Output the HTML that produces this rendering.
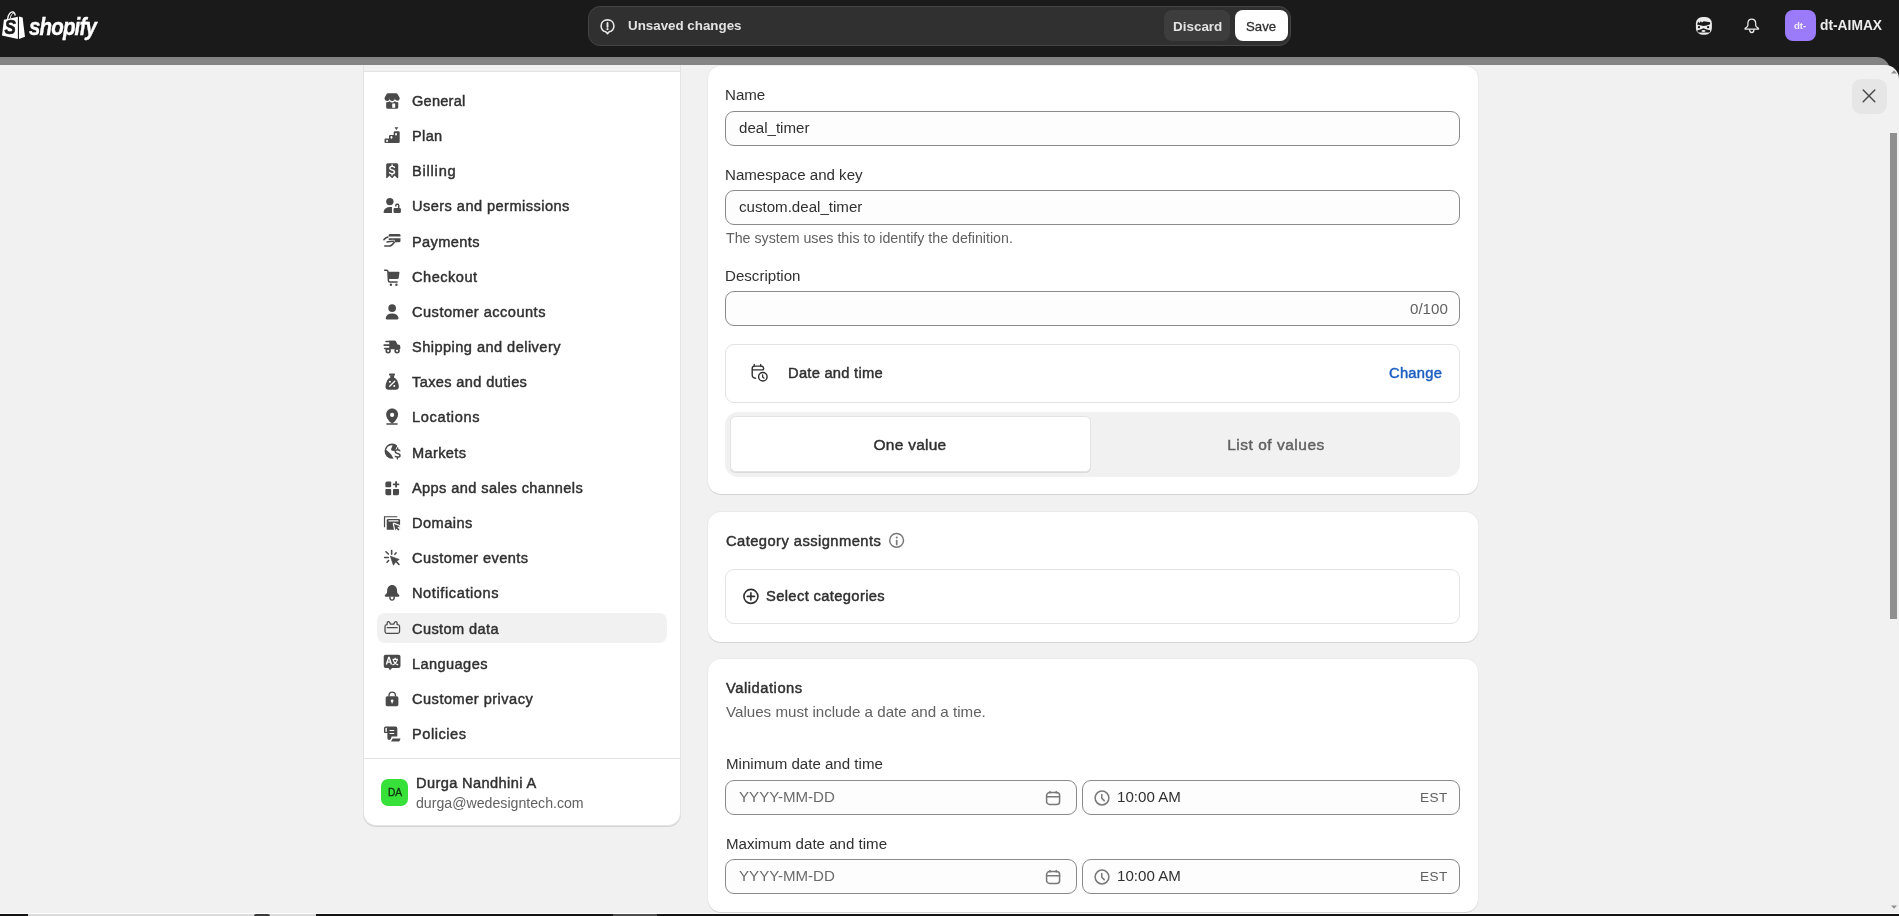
<!DOCTYPE html>
<html><head><meta charset="utf-8"><title>Shopify</title>
<style>
*{box-sizing:border-box}
html,body{margin:0;padding:0}
body{width:1899px;height:916px;overflow:hidden;position:relative;background:#1a1a1a;font-family:"Liberation Sans",sans-serif;color:#303030}
.a{position:absolute}
.t{position:absolute;white-space:nowrap;line-height:20px;will-change:transform}
.card{position:absolute;background:#fff;border-radius:13px;box-shadow:0 1px 0 #d4d4d4,0 0 0 1px #ebebeb}
.inp{position:absolute;background:#fdfdfd;border:1px solid #8a8a8a;border-radius:9px}
.box{position:absolute;background:#fff;border:1px solid #e3e3e3;border-radius:9px}
</style></head><body>
<div class="a" style="left:0;top:57px;width:1890px;height:40px;background:#848484;border-top-right-radius:14px"></div>
<div class="a" style="left:0;top:65px;width:1899px;height:849px;background:#f1f1f1;border-top-right-radius:14px"></div>
<svg class="a" style="left:0;top:8px;will-change:transform" width="30" height="36" viewBox="0 0 30 36">
<path d="M3.9 11.8 L17.9 8.7 L17.9 31 L2 27.6 Z" fill="#fff"/>
<path d="M19 8.6 L22.6 9.5 L25 28.7 L19 31 Z" fill="#fff"/>
<path d="M7.6 11 C8.2 6.5 10.5 3.8 12.6 3.9 C14.2 4 15 5.6 15.2 7.6" fill="none" stroke="#fff" stroke-width="1.3"/>
<path d="M10.2 10.4 C10.8 7 12.2 5.2 13.6 5.4" fill="none" stroke="#fff" stroke-width="1"/>
<text x="4.4" y="22.9" transform="scale(1,1.15)" font-family="Liberation Sans" font-weight="bold" font-style="italic" font-size="17" fill="#1a1a1a" stroke="#1a1a1a" stroke-width="0.6">S</text>
</svg>
<div class="t" style="left:28.90px;top:16.90px;font-size:20.5px;font-weight:bold;color:#fff;font-style:italic;letter-spacing:-0.85px;-webkit-text-stroke:0.35px #fff;transform:scaleY(1.15);transform-origin:0 11px">shopify</div>
<div class="a" style="left:588px;top:6px;width:703px;height:40px;background:#303030;border:1px solid #424545;border-radius:12px"></div>
<svg class="a" style="left:599px;top:18px" width="17" height="17" viewBox="0 0 17 17">
<path d="M8.5 1.9 C12.2 1.9 14.9 4.4 14.9 7.9 C14.9 10.9 12.9 13.1 10.2 13.8 L8.5 15.7 L6.8 13.8 C4.1 13.1 2.1 10.9 2.1 7.9 C2.1 4.4 4.8 1.9 8.5 1.9 Z" fill="none" stroke="#e6e6e6" stroke-width="1.6" stroke-linejoin="round"/>
<path d="M8.5 5 V8.9" stroke="#e6e6e6" stroke-width="1.9" stroke-linecap="round"/>
<circle cx="8.5" cy="11.2" r="1.1" fill="#e6e6e6"/>
</svg>
<div class="t" style="left:627.60px;top:15.87px;font-size:13.35px;font-weight:bold;color:#e3e3e3;">Unsaved changes</div>
<div class="a" style="left:1164px;top:10px;width:66px;height:31px;background:#3d3d3d;border-radius:8px"></div>
<div class="t" style="left:1172.60px;top:16.64px;font-size:13.45px;font-weight:bold;color:#e3e3e3;">Discard</div>
<div class="a" style="left:1235px;top:10px;width:53px;height:31px;background:#fff;border-radius:8px"></div>
<div class="t" style="left:1245.80px;top:16.53px;font-size:13.2px;font-weight:normal;color:#303030;-webkit-text-stroke:0.3px #303030">Save</div>
<svg class="a" style="left:1692px;top:14px" width="24" height="24" viewBox="0 0 24 24">
<rect x="3.9" y="2.9" width="16" height="17.8" rx="6.6" fill="#ececec"/>
<path d="M5.1 10.4L6.2 7.5L7.3 9L8.9 7.2L9.9 8.6L11.8 7.3L18.1 8.3V10.2L14.7 11.4L11.5 11.9L7.9 11.2Z" fill="#1a1a1a"/>
<circle cx="6.95" cy="13.2" r="1.15" fill="#1a1a1a"/><circle cx="16.1" cy="13.2" r="1.15" fill="#1a1a1a"/>
<path d="M5.5 16.3Q8.6 15.8 11.5 14.2Q14.4 15.8 18.1 16.3V17.6Q18.1 18.4 17.3 18.4H6.3Q5.5 18.4 5.5 17.6Z" fill="#1a1a1a"/>
<ellipse cx="11.5" cy="16.9" rx="2" ry="1" fill="#ececec"/>
</svg>
<svg class="a" style="left:1740px;top:14px" width="24" height="24" viewBox="0 0 24 24">
<path d="M11.8 5C9.4 5 7.9 6.9 7.9 9.2V10.9Q7.9 11.9 7.2 12.7L5.3 14.2Q4.6 15.2 5.7 15.2H17.9Q19 15.2 18.3 14.2L16.4 12.7Q15.7 11.9 15.7 10.9V9.2C15.7 6.9 14.2 5 11.8 5Z" fill="none" stroke="#ececec" stroke-width="1.25" stroke-linejoin="round"/>
<path d="M9.6 15.3Q9.6 18.6 11.8 18.6Q14 18.6 14 15.3" fill="none" stroke="#ececec" stroke-width="1.25"/>
</svg>
<div class="a" style="left:1785px;top:10px;width:31px;height:31px;background:#9b7bfa;border-radius:8px"></div>
<div class="t" style="left:1793.60px;top:15.67px;font-size:9.6px;font-weight:bold;color:#f3ecff;">dt-</div>
<div class="t" style="left:1819.80px;top:15.52px;font-size:13.8px;font-weight:bold;color:#ececec;">dt-AIMAX</div>
<div class="a" style="left:1852px;top:79px;width:35px;height:35px;background:#e6e6e6;border-radius:9px"></div>
<svg class="a" style="left:1860px;top:87px" width="18" height="18" viewBox="0 0 18 18">
<path d="M3.2 3 L14.8 14.8 M14.8 3 L3.2 14.8" stroke="#4a4a4a" stroke-width="1.45" stroke-linecap="round"/></svg>
<div class="a" style="left:1890px;top:133px;width:7px;height:486px;background:#8f8f8f"></div>
<svg class="a" style="left:1890px;top:69px" width="8" height="6" viewBox="0 0 8 6"><path d="M1 4.4 L4 1.2 L7 4.4Z" fill="#8f8f8f"/></svg>
<svg class="a" style="left:1890px;top:904px" width="8" height="6" viewBox="0 0 8 6"><path d="M1 1.6 L4 4.8 L7 1.6Z" fill="#8f8f8f"/></svg>
<div class="a" style="left:363px;top:65px;width:318px;height:761px;background:#fff;border:1px solid #e3e3e3;border-top:none;border-radius:0 0 13px 13px;box-shadow:0 1px 0 #d4d4d4"></div>
<div class="a" style="left:364px;top:65px;width:316px;height:7px;background:#f1f1f1;border-bottom:1px solid #e3e3e3"></div>
<div class="a" style="left:377px;top:613px;width:290px;height:30px;background:#f1f1f1;border-radius:8px"></div>
<div class="a" style="left:364px;top:758px;width:316px;height:1px;background:#e3e3e3"></div>
<svg class="a" style="left:380.70px;top:89.70px" width="22" height="22" viewBox="0 0 20 20"><path d="M6.4 3H13.6Q14.6 3 15.1 3.8L16.6 6.3Q17 7 17 7.7A2.2 2.2 0 0 1 12.6 7.6A2.4 2.4 0 0 1 7.8 7.6A2.3 2.3 0 0 1 3.2 7.7Q3.2 7 3.6 6.3L5 3.8Q5.5 3 6.4 3Z" fill="#4a4a4a"/><path d="M4.7 11.2Q6.7 11.4 7.8 10.2Q9 11.4 10.2 11.4Q11.4 11.4 12.6 10.2Q13.7 11.4 15.7 11.2V15.6Q15.7 17 14.3 17H6.1Q4.7 17 4.7 15.6Z" fill="#4a4a4a"/><rect x="10.2" y="12.3" width="2.7" height="3.9" rx=".3" fill="#fff"/></svg>
<div class="t" style="left:411.80px;top:90.96px;font-size:14.586px;font-weight:normal;color:#303030;letter-spacing:0.227px;-webkit-text-stroke:0.45px #303030;">General</div>
<svg class="a" style="left:380.70px;top:124.87px" width="22" height="22" viewBox="0 0 20 20"><path d="M3.2 13.2Q3.2 12.2 4.2 12.2H7.3V9.9Q7.3 9 8.2 9H11.5V6.6Q11.5 5.6 12.5 5.6H16Q17 5.6 17 6.6V15.4Q17 16.4 16 16.4H4.2Q3.2 16.4 3.2 15.4Z" fill="#4a4a4a"/><rect x="4.7" y="13.3" width="1.6" height="2.3" rx=".75" fill="#fff"/><rect x="8.65" y="10" width="1.7" height="2.5" rx=".8" fill="#fff"/><rect x="12.8" y="7.2" width="1.7" height="2.3" rx=".8" fill="#fff"/><path d="M12.2 2H15.8L14 4.6Z" fill="#4a4a4a"/></svg>
<div class="t" style="left:411.80px;top:126.13px;font-size:14.586px;font-weight:normal;color:#303030;letter-spacing:0.335px;-webkit-text-stroke:0.45px #303030;">Plan</div>
<svg class="a" style="left:380.70px;top:160.04px" width="22" height="22" viewBox="0 0 20 20"><path d="M6.2 2.9H14.2Q15.7 2.9 15.7 4.4V15.8Q15.7 16.5 15 16.5Q14.6 16.5 14.4 16.2L12.4 14.2L10.6 16.1Q10.1 16.6 9.6 16.1L7.7 14.2L5.9 16.2Q5.6 16.5 5.3 16.5Q4.7 16.5 4.7 15.8V4.4Q4.7 2.9 6.2 2.9Z" fill="#4a4a4a"/><path d="M12.2 6.7Q11.7 5.8 10.1 5.8Q8 5.8 8 7.4Q8 8.6 10 9Q12.3 9.5 12.3 11Q12.3 12.5 10.1 12.5Q8.4 12.5 7.8 11.5M10.1 4.5V5.8M10 12.5V13.6" fill="none" stroke="#fff" stroke-width="1.35" stroke-linecap="round"/></svg>
<div class="t" style="left:411.80px;top:161.30px;font-size:14.586px;font-weight:normal;color:#303030;letter-spacing:0.796px;-webkit-text-stroke:0.45px #303030;">Billing</div>
<svg class="a" style="left:380.70px;top:195.21px" width="22" height="22" viewBox="0 0 20 20"><circle cx="8.05" cy="6" r="3.35" fill="#4a4a4a"/><path d="M9.96 10.93V16.4H3.2Q2.2 16.4 2.3 15.4Q2.8 12.6 5 11.6Q6.3 10.93 8 10.93Z" fill="#4a4a4a"/><path d="M13.5 10.4V9.3Q13.5 8.4 14.4 8.4H15.2Q16.1 8.4 16.1 9.3V12" fill="none" stroke="#4a4a4a" stroke-width="1.3"/><rect x="11.4" y="11.9" width="6.66" height="4.5" rx="1" fill="#4a4a4a"/></svg>
<div class="t" style="left:411.80px;top:196.47px;font-size:14.586px;font-weight:normal;color:#303030;letter-spacing:0.451px;-webkit-text-stroke:0.45px #303030;">Users and permissions</div>
<svg class="a" style="left:380.70px;top:230.38px" width="22" height="22" viewBox="0 0 20 20"><path d="M8.2 3.6H16.5Q17.7 3.6 17.7 4.8V5.8H7V4.8Q7 3.6 8.2 3.6Z" fill="#4a4a4a"/><path d="M7 7.4H17.7V9.9Q17.7 11.1 16.5 11.1H7Z" fill="#4a4a4a"/><path d="M5.6 10.9Q8 10.2 11.3 10.2" fill="none" stroke="#fff" stroke-width="2.6" stroke-linecap="round"/><path d="M5.6 10.9Q8 10.2 11.3 10.2" fill="none" stroke="#4a4a4a" stroke-width="1.4" stroke-linecap="round"/><path d="M2.6 8.8Q4 7 6.3 6.4M3.4 14.6H7.8Q9 14.5 10.2 13.3L12.2 11.1" fill="none" stroke="#4a4a4a" stroke-width="1.4" stroke-linecap="round"/></svg>
<div class="t" style="left:411.80px;top:231.64px;font-size:14.586px;font-weight:normal;color:#303030;letter-spacing:0.387px;-webkit-text-stroke:0.45px #303030;">Payments</div>
<svg class="a" style="left:380.70px;top:265.55px" width="22" height="22" viewBox="0 0 20 20"><path d="M3.3 3.9H5Q6.1 3.9 6.3 5L6.75 13.3Q6.8 14.5 8 14.5H14.6" fill="none" stroke="#4a4a4a" stroke-width="1.4" stroke-linecap="round" stroke-linejoin="round"/><path d="M6.4 5.2H16.2Q16.8 5.2 16.75 5.8L16.2 10.4Q16 11.9 14.5 11.9H6.6Z" fill="#4a4a4a"/><circle cx="9" cy="17.1" r="1.1" fill="#4a4a4a"/><circle cx="14" cy="17.1" r="1.1" fill="#4a4a4a"/></svg>
<div class="t" style="left:411.80px;top:266.81px;font-size:14.586px;font-weight:normal;color:#303030;letter-spacing:0.505px;-webkit-text-stroke:0.45px #303030;">Checkout</div>
<svg class="a" style="left:380.70px;top:300.72px" width="22" height="22" viewBox="0 0 20 20"><circle cx="10.14" cy="6.5" r="3.45" fill="#4a4a4a"/><path d="M4.3 15.2Q5.2 11.3 10.1 11.3Q15 11.3 15.9 15.2Q16.2 16.85 14.8 16.85H5.4Q3.9 16.85 4.3 15.2Z" fill="#4a4a4a"/></svg>
<div class="t" style="left:411.80px;top:301.98px;font-size:14.586px;font-weight:normal;color:#303030;letter-spacing:0.490px;-webkit-text-stroke:0.45px #303030;">Customer accounts</div>
<svg class="a" style="left:380.70px;top:335.89px" width="22" height="22" viewBox="0 0 20 20"><path d="M7.5 4.3H12.6Q13.3 4.3 13.7 5L14.9 7.8H15.6Q17.6 7.8 17.6 10V11.2Q17.6 12.1 16.7 12.1H7.5Z" fill="#4a4a4a"/><path d="M4.6 5H12.6M2.9 8.3H8.4M3.4 11.4H8" stroke="#4a4a4a" stroke-width="1.45" stroke-linecap="round"/><circle cx="6.5" cy="13.5" r="1.75" fill="#fff" stroke="#4a4a4a" stroke-width="1.5"/><circle cx="14.6" cy="13.5" r="1.75" fill="#fff" stroke="#4a4a4a" stroke-width="1.5"/></svg>
<div class="t" style="left:411.80px;top:337.15px;font-size:14.586px;font-weight:normal;color:#303030;letter-spacing:0.456px;-webkit-text-stroke:0.45px #303030;">Shipping and delivery</div>
<svg class="a" style="left:380.70px;top:371.06px" width="22" height="22" viewBox="0 0 20 20"><rect x="7.3" y="2.2" width="5.4" height="1.9" rx=".8" fill="#4a4a4a"/><rect x="8.4" y="3.8" width="3.5" height="2.6" fill="#4a4a4a"/><path d="M8.4 6.1H11.9Q13.6 6.4 14.6 8.3Q16.2 11.6 16.2 14Q16.2 17 13.5 17H6.8Q4.1 17 4.1 14Q4.1 11.6 5.7 8.3Q6.7 6.4 8.4 6.1Z" fill="#4a4a4a"/><path d="M7.9 13.9L12.5 9.3" stroke="#fff" stroke-width="1.2" stroke-linecap="round"/><circle cx="8.1" cy="9.7" r=".9" fill="#fff"/><circle cx="12.1" cy="13.7" r=".9" fill="#fff"/></svg>
<div class="t" style="left:411.80px;top:372.32px;font-size:14.586px;font-weight:normal;color:#303030;letter-spacing:0.367px;-webkit-text-stroke:0.45px #303030;">Taxes and duties</div>
<svg class="a" style="left:380.70px;top:406.23px" width="22" height="22" viewBox="0 0 20 20"><path d="M10.1 2.3C13.1 2.3 15.5 4.7 15.5 7.7C15.5 10.8 12.9 13.7 10.9 15.5Q10.1 16.2 9.3 15.5C7.3 13.7 4.7 10.8 4.7 7.7C4.7 4.7 7.1 2.3 10.1 2.3Z" fill="#4a4a4a"/><circle cx="10.1" cy="8.1" r="1.9" fill="#fff"/><path d="M5.4 16.3H14.6" stroke="#4a4a4a" stroke-width="1.3" stroke-linecap="round"/></svg>
<div class="t" style="left:411.80px;top:407.49px;font-size:14.586px;font-weight:normal;color:#303030;letter-spacing:0.637px;-webkit-text-stroke:0.45px #303030;">Locations</div>
<svg class="a" style="left:380.70px;top:441.40px" width="22" height="22" viewBox="0 0 20 20"><circle cx="10.1" cy="9.2" r="6.85" fill="#4a4a4a"/><path d="M4.6 7.9L6.1 5.3L8.3 4.2L10.6 3.9L9.1 7.5L9.8 8.9L12.4 9.2L11.6 16.6L10.8 14.9L9.4 12.5L7.5 10.35Z" fill="#fff"/><path d="M14.9 2.5L19 2.5L19 18L11.7 18L12 10L14.5 4.9Z" fill="#fff"/><path d="M17.1 8.9Q16.6 7.9 15 7.9Q13 7.9 13 9.6Q13 10.9 15 11.4Q17.3 11.9 17.3 13.3Q17.3 14.6 15.1 14.6Q13.8 14.6 13.1 14M15.1 6.3V7.9M14.9 14.6V16.1" fill="none" stroke="#4a4a4a" stroke-width="1.3" stroke-linecap="round"/></svg>
<div class="t" style="left:411.80px;top:442.66px;font-size:14.586px;font-weight:normal;color:#303030;letter-spacing:0.363px;-webkit-text-stroke:0.45px #303030;">Markets</div>
<svg class="a" style="left:380.70px;top:476.57px" width="22" height="22" viewBox="0 0 20 20"><path d="M4 5.6Q4 4.1 5.5 4.1H8.6Q9.25 4.1 9.25 4.8V8.7Q9.25 9.4 8.6 9.4H4.7Q4 9.4 4 8.7Z" fill="#4a4a4a"/><path d="M4 11.7Q4 11 4.7 11H8.6Q9.25 11 9.25 11.7V15.8Q9.25 16.5 8.6 16.5H5.5Q4 16.5 4 15Z" fill="#4a4a4a"/><path d="M10.9 11.7Q10.9 11 11.6 11H15.7Q16.4 11 16.4 11.7V15Q16.4 16.5 14.9 16.5H11.6Q10.9 16.5 10.9 15.8Z" fill="#4a4a4a"/><path d="M13.7 4.5V8.8M11.5 6.65H15.9" stroke="#4a4a4a" stroke-width="1.65" stroke-linecap="round"/></svg>
<div class="t" style="left:411.80px;top:477.83px;font-size:14.586px;font-weight:normal;color:#303030;letter-spacing:0.395px;-webkit-text-stroke:0.45px #303030;">Apps and sales channels</div>
<svg class="a" style="left:380.70px;top:511.74px" width="22" height="22" viewBox="0 0 20 20"><path d="M3.2 13.4V4.3H14.4" fill="none" stroke="#4a4a4a" stroke-width="1.1" stroke-linecap="round"/><path d="M5.2 7.6Q5.2 6.36 6.4 6.36H16.1Q17.34 6.36 17.34 7.6V16.24H5.2Z" fill="#4a4a4a"/><rect x="6.75" y="7.55" width="9.25" height="1.07" rx=".5" fill="#fff"/><path d="M11.75 10.8L17.3 13L14.9 13.9L16.8 15.8L15.7 16.9L13.8 15L13.2 17Z" fill="#fff" stroke="#fff" stroke-width="2.2" stroke-linejoin="round"/><path d="M11.75 10.8L17.3 13L14.9 13.9L16.8 15.8L15.7 16.9L13.8 15L13.2 17Z" fill="#4a4a4a"/></svg>
<div class="t" style="left:411.80px;top:513.00px;font-size:14.586px;font-weight:normal;color:#303030;letter-spacing:0.473px;-webkit-text-stroke:0.45px #303030;">Domains</div>
<svg class="a" style="left:380.70px;top:546.91px" width="22" height="22" viewBox="0 0 20 20"><path d="M8.5 8.3L16.6 11.3L13.6 13.1L11.3 16.6Z" fill="#4a4a4a" stroke="#4a4a4a" stroke-width=".6" stroke-linejoin="round"/><path d="M13.7 13.1L16.3 15.9M9.7 3.3V6.5M4.5 4.3L6.7 6.4M13.7 5.3L12.6 6.7M3.3 9.5H6.6M6.9 12.3L5.5 13.8" stroke="#4a4a4a" stroke-width="1.45" stroke-linecap="round"/></svg>
<div class="t" style="left:411.80px;top:548.17px;font-size:14.586px;font-weight:normal;color:#303030;letter-spacing:0.413px;-webkit-text-stroke:0.45px #303030;">Customer events</div>
<svg class="a" style="left:380.70px;top:582.08px" width="22" height="22" viewBox="0 0 20 20"><path d="M10.1 2.8C12.7 2.8 14.5 4.9 14.6 7.5L14.7 9.3Q14.8 10.1 15.4 10.7L16.3 11.6Q16.9 12.3 16.6 12.9Q16.4 13.3 15.9 13.3H4.2Q3.7 13.3 3.5 12.9Q3.3 12.3 3.9 11.6L4.8 10.7Q5.4 10.1 5.5 9.3L5.6 7.5C5.7 4.9 7.5 2.8 10.1 2.8Z" fill="#4a4a4a"/><path d="M8 13.2Q8 16.5 10.05 16.5Q12.1 16.5 12.1 13.2" fill="none" stroke="#4a4a4a" stroke-width="1.3"/></svg>
<div class="t" style="left:411.80px;top:583.34px;font-size:14.586px;font-weight:normal;color:#303030;letter-spacing:0.596px;-webkit-text-stroke:0.45px #303030;">Notifications</div>
<svg class="a" style="left:380.70px;top:617.25px" width="22" height="22" viewBox="0 0 20 20"><path d="M3.65 8.6Q3.65 6.9 5.2 6.9H5.6V5.3Q5.6 4.1 6.7 4.1Q7.7 4.1 8.1 5.2L8.5 6.4H11.7L12.1 5.2Q12.5 4.1 13.5 4.1Q14.6 4.1 14.6 5.3V6.9H15.2Q16.87 6.9 16.87 8.6V13.1Q16.87 14.78 15.2 14.78H5.3Q3.65 14.78 3.65 13.1Z" fill="none" stroke="#4a4a4a" stroke-width="1.15" stroke-linejoin="round"/><path d="M5.8 9.66H14.6" stroke="#4a4a4a" stroke-width="1.3" stroke-linecap="round"/></svg>
<div class="t" style="left:411.80px;top:618.51px;font-size:14.586px;font-weight:normal;color:#303030;letter-spacing:0.391px;-webkit-text-stroke:0.45px #303030;">Custom data</div>
<svg class="a" style="left:380.70px;top:652.42px" width="22" height="22" viewBox="0 0 20 20"><path d="M4.2 2.4H15.9Q17.7 2.4 17.7 4.2V12.8Q17.7 14.6 15.9 14.6H10.1L8.1 16.6L6.8 14.6H4.2Q2.5 14.6 2.5 12.8V4.2Q2.5 2.4 4.2 2.4Z" fill="#4a4a4a"/><path d="M4.9 11.3L7 4.9H7.4L9.5 11.3M5.7 9.2H8.7" fill="none" stroke="#fff" stroke-width="1.3"/><path d="M12.9 5.2V6.3M10.5 6.7H15.4M11.1 7.2Q12.4 11 15.6 11.8M14.8 7.2Q13.5 11 10.4 11.8" fill="none" stroke="#fff" stroke-width="1.15"/></svg>
<div class="t" style="left:411.80px;top:653.68px;font-size:14.586px;font-weight:normal;color:#303030;letter-spacing:0.412px;-webkit-text-stroke:0.45px #303030;">Languages</div>
<svg class="a" style="left:380.70px;top:687.59px" width="22" height="22" viewBox="0 0 20 20"><path d="M7.3 7.8V6.7Q7.3 3.75 10.2 3.75Q13.1 3.75 13.1 6.7V7.8" fill="none" stroke="#4a4a4a" stroke-width="1.25"/><rect x="4.25" y="7.56" width="11.55" height="9.04" rx="1.5" fill="#4a4a4a"/><circle cx="10.08" cy="11.7" r="1.25" fill="#fff"/><path d="M9.4 12.2H10.8L10.4 14.2H9.8Z" fill="#fff"/></svg>
<div class="t" style="left:411.80px;top:688.85px;font-size:14.586px;font-weight:normal;color:#303030;letter-spacing:0.488px;-webkit-text-stroke:0.45px #303030;">Customer privacy</div>
<svg class="a" style="left:380.70px;top:722.76px" width="22" height="22" viewBox="0 0 20 20"><path d="M2.7 4.8Q2.7 3.24 4.2 3.24H13.3Q14.84 3.24 14.84 4.8V12.17H9.6L9.13 14.2Q8.6 15.5 7.5 15.5Q5.8 15.5 5.8 13.7V9.07H3.6Q2.7 9.07 2.7 8.2Z" fill="#4a4a4a"/><rect x="4" y="4.43" width="1.3" height="3.7" rx=".6" fill="#fff"/><rect x="7.58" y="6.45" width="4.64" height=".9" rx=".45" fill="#fff"/><rect x="7.58" y="9.19" width="4.64" height=".9" rx=".45" fill="#fff"/><path d="M10.6 14H17.7L17.1 16Q16.8 16.8 16 16.8H9.1Z" fill="#4a4a4a"/></svg>
<div class="t" style="left:411.80px;top:724.02px;font-size:14.586px;font-weight:normal;color:#303030;letter-spacing:0.541px;-webkit-text-stroke:0.45px #303030;">Policies</div>
<div class="a" style="left:381px;top:779px;width:27px;height:26.5px;background:#38e03a;border-radius:7px"></div>
<div class="t" style="left:-5.40px;width:800px;text-align:center;top:782.67px;font-size:10.2px;font-weight:normal;color:#0d300d;-webkit-text-stroke:0.3px #0d300d">DA</div>
<div class="t" style="left:416.30px;top:772.65px;font-size:14.586px;font-weight:normal;color:#303030;letter-spacing:0.393px;-webkit-text-stroke:0.45px #303030;">Durga Nandhini A</div>
<div class="t" style="left:416.30px;top:793.10px;font-size:14.15px;font-weight:normal;color:#616161;">durga@wedesigntech.com</div>
<div class="card" style="left:708px;top:66px;width:770px;height:428px"></div>
<div class="t" style="left:725.30px;top:84.67px;font-size:15.1px;font-weight:normal;color:#303030;">Name</div>
<div class="inp" style="left:725px;top:111px;width:735px;height:35px"></div>
<div class="t" style="left:738.60px;top:117.87px;font-size:15.1px;font-weight:normal;color:#303030;">deal_timer</div>
<div class="t" style="left:725.30px;top:165.17px;font-size:15.1px;font-weight:normal;color:#303030;">Namespace and key</div>
<div class="inp" style="left:725px;top:190px;width:735px;height:35px"></div>
<div class="t" style="left:738.60px;top:196.97px;font-size:15.1px;font-weight:normal;color:#303030;">custom.deal_timer</div>
<div class="t" style="left:725.60px;top:228.07px;font-size:14.22px;font-weight:normal;color:#616161;">The system uses this to identify the definition.</div>
<div class="t" style="left:725.30px;top:266.27px;font-size:15.1px;font-weight:normal;color:#303030;">Description</div>
<div class="inp" style="left:725px;top:291px;width:735px;height:35px"></div>
<div class="t" style="right:451.50px;top:299.17px;font-size:15.1px;font-weight:normal;color:#616161;">0/100</div>
<div class="box" style="left:725px;top:344px;width:735px;height:59px"></div>
<svg class="a" style="left:748px;top:362px" width="22" height="22" viewBox="0 0 22 22">
<path d="M7.6 16.2Q4.2 16.2 4.2 12.8V6.6Q4.2 4.1 6.6 4.1H13.2Q15.6 4.1 15.6 6.4V7.1Q15.6 7.9 14.8 7.9H4.4" fill="none" stroke="#303030" stroke-width="1.4" stroke-linecap="round" stroke-linejoin="round"/>
<path d="M6.2 2.5V4.2M12.7 2.5V4.2" stroke="#303030" stroke-width="1.3" stroke-linecap="round"/>
<circle cx="14.86" cy="14.76" r="4.25" fill="#fff" stroke="#303030" stroke-width="1.4"/>
<path d="M14.6 13V14.9L15.9 16.1" fill="none" stroke="#303030" stroke-width="1.3" stroke-linecap="round"/>
</svg>
<div class="t" style="left:787.80px;top:362.89px;font-size:14.739px;font-weight:normal;color:#303030;letter-spacing:0.249px;-webkit-text-stroke:0.45px #303030;">Date and time</div>
<div class="t" style="right:456.73px;top:362.89px;font-size:14.739px;font-weight:normal;color:#1c5fc0;letter-spacing:0.272px;-webkit-text-stroke:0.45px #1c5fc0;">Change</div>
<div class="a" style="left:725px;top:412px;width:735px;height:65px;background:#f1f1f1;border-radius:13px"></div>
<div class="a" style="left:730px;top:416px;width:361px;height:55.5px;background:#fff;border:1px solid #e3e3e3;border-radius:5.5px;box-shadow:0 1px 0 #dcdcdc"></div>
<div class="t" style="left:510.30px;width:800px;text-align:center;top:434.63px;font-size:15.504px;font-weight:normal;color:#303030;letter-spacing:0.247px;-webkit-text-stroke:0.45px #303030;">One value</div>
<div class="t" style="left:875.50px;width:800px;text-align:center;top:434.63px;font-size:15.504px;font-weight:normal;color:#616161;letter-spacing:0.511px;-webkit-text-stroke:0.45px #616161;">List of values</div>
<div class="card" style="left:708px;top:512px;width:770px;height:130px"></div>
<div class="t" style="left:725.50px;top:530.79px;font-size:14.739px;font-weight:normal;color:#303030;letter-spacing:0.439px;-webkit-text-stroke:0.45px #303030;">Category assignments</div>
<svg class="a" style="left:885px;top:529px" width="22" height="22" viewBox="0 0 22 22">
<circle cx="11.6" cy="11.4" r="6.9" fill="none" stroke="#787878" stroke-width="1.5"/>
<path d="M11.7 11.6v3.8" stroke="#787878" stroke-width="1.7" stroke-linecap="round"/><circle cx="11.75" cy="8.5" r="1.05" fill="#787878"/>
</svg>
<div class="box" style="left:725px;top:569px;width:735px;height:55px"></div>
<svg class="a" style="left:740px;top:585px" width="22" height="22" viewBox="0 0 22 22">
<circle cx="10.9" cy="11.4" r="7" fill="none" stroke="#303030" stroke-width="1.6"/>
<path d="M10.9 7.8v7.2M7.3 11.4h7.2" stroke="#303030" stroke-width="1.6" stroke-linecap="round"/>
</svg>
<div class="t" style="left:766.00px;top:586.39px;font-size:14.739px;font-weight:normal;color:#303030;letter-spacing:0.363px;-webkit-text-stroke:0.45px #303030;">Select categories</div>
<div class="card" style="left:708px;top:659px;width:770px;height:253px"></div>
<div class="t" style="left:725.60px;top:677.69px;font-size:14.739px;font-weight:normal;color:#303030;letter-spacing:0.527px;-webkit-text-stroke:0.45px #303030;">Validations</div>
<div class="t" style="left:725.60px;top:702.35px;font-size:15.15px;font-weight:normal;color:#616161;">Values must include a date and a time.</div>
<div class="t" style="left:725.50px;top:754.27px;font-size:15.1px;font-weight:normal;color:#303030;">Minimum date and time</div>
<div class="inp" style="left:725px;top:780px;width:352px;height:35px"></div>
<div class="t" style="left:739.30px;top:787.37px;font-size:15.1px;font-weight:normal;color:#6b6b6b;">YYYY-MM-DD</div>
<svg class="a" style="left:1041.5px;top:786.8px" width="22" height="22" viewBox="0 0 22 22">
<rect x="4.6" y="5.6" width="13" height="11.8" rx="3" fill="none" stroke="#787878" stroke-width="1.5"/>
<path d="M4.6 9.7h13M8 4.4v1.6M14.2 4.4v1.6" stroke="#787878" stroke-width="1.4" stroke-linecap="round"/>
</svg>
<div class="inp" style="left:1082px;top:780px;width:378px;height:35px"></div>
<svg class="a" style="left:1090.6px;top:786.8px" width="22" height="22" viewBox="0 0 22 22">
<circle cx="11" cy="11" r="6.9" fill="none" stroke="#787878" stroke-width="1.5"/>
<path d="M10.8 7.4v3.8l2.4 2.4" fill="none" stroke="#787878" stroke-width="1.5" stroke-linecap="round"/>
</svg>
<div class="t" style="left:1117.20px;top:787.37px;font-size:15.1px;font-weight:normal;color:#303030;">10:00 AM</div>
<div class="t" style="right:451.80px;top:787.89px;font-size:13.6px;font-weight:normal;color:#616161;letter-spacing:.4px">EST</div>
<div class="t" style="left:725.50px;top:834.37px;font-size:15.1px;font-weight:normal;color:#303030;">Maximum date and time</div>
<div class="inp" style="left:725px;top:859px;width:352px;height:35px"></div>
<div class="t" style="left:739.30px;top:866.37px;font-size:15.1px;font-weight:normal;color:#6b6b6b;">YYYY-MM-DD</div>
<svg class="a" style="left:1041.5px;top:865.8px" width="22" height="22" viewBox="0 0 22 22">
<rect x="4.6" y="5.6" width="13" height="11.8" rx="3" fill="none" stroke="#787878" stroke-width="1.5"/>
<path d="M4.6 9.7h13M8 4.4v1.6M14.2 4.4v1.6" stroke="#787878" stroke-width="1.4" stroke-linecap="round"/>
</svg>
<div class="inp" style="left:1082px;top:859px;width:378px;height:35px"></div>
<svg class="a" style="left:1090.6px;top:865.8px" width="22" height="22" viewBox="0 0 22 22">
<circle cx="11" cy="11" r="6.9" fill="none" stroke="#787878" stroke-width="1.5"/>
<path d="M10.8 7.4v3.8l2.4 2.4" fill="none" stroke="#787878" stroke-width="1.5" stroke-linecap="round"/>
</svg>
<div class="t" style="left:1117.20px;top:866.37px;font-size:15.1px;font-weight:normal;color:#303030;">10:00 AM</div>
<div class="t" style="right:451.80px;top:866.89px;font-size:13.6px;font-weight:normal;color:#616161;letter-spacing:.4px">EST</div>
<div class="a" style="left:0;top:913px;width:1899px;height:1px;background:#fff"></div>
<div class="a" style="left:0;top:914px;width:1899px;height:2px;background:#141414"></div>
<div class="a" style="left:28px;top:914px;width:288px;height:2px;background:#dcdcdc"></div>
<div class="a" style="left:254px;top:914px;width:16px;height:2px;background:#3a3a3a;border-radius:3px 3px 0 0"></div>
<div class="a" style="left:613px;top:914px;width:44px;height:2px;background:#4d4d4d"></div>
</body></html>
